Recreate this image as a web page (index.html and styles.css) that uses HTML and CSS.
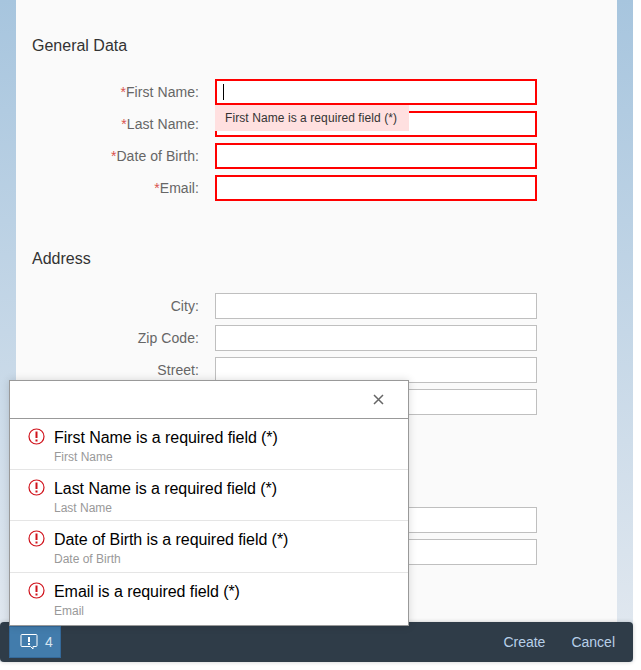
FILE: index.html
```html
<!DOCTYPE html>
<html lang="en">
<head>
  <meta charset="UTF-8" />
  <title>Create Form</title>
  <link rel="stylesheet" href="styles.css">
</head>
<body>
  <div class="shell">
    <div class="panel">
      <h2 class="section-title">General Data</h2>
      <div class="form-row"><label><span class="req">*</span>First Name:</label>
        <div class="field error"><span class="caret"></span></div></div>
      <div class="form-row"><label><span class="req">*</span>Last Name:</label>
        <div class="field error"></div></div>
      <div class="form-row"><label><span class="req">*</span>Date of Birth:</label>
        <div class="field error"></div></div>
      <div class="form-row"><label><span class="req">*</span>Email:</label>
        <div class="field error"></div></div>

      <h2 class="section-title address">Address</h2>
      <div class="form-row"><label>City:</label><div class="field"></div></div>
      <div class="form-row"><label>Zip Code:</label><div class="field"></div></div>
      <div class="form-row"><label>Street:</label><div class="field"></div></div>
      <div class="form-row"><label></label><div class="field"></div></div>

      <div class="form-group">
        <div class="form-row"><label></label><div class="field"></div></div>
        <div class="form-row"><label></label><div class="field"></div></div>
      </div>
    </div>

    <div class="footer">
      <button class="msg-btn">
        <svg width="18" height="18" viewBox="0 0 18 18" fill="none">
          <path d="M2 1.500h14a1 1 0 0 1 1 1v10a1 1 0 0 1-1 1h-3v2.500l-2.500-2.500h-8.500a1 1 0 0 1-1-1v-10a1 1 0 0 1 1-1z" stroke="#fff" stroke-width="1"/>
          <rect x="8" y="4" width="2" height="5" fill="#fff"/>
          <rect x="8" y="10" width="2" height="2" fill="#fff"/>
        </svg>
        <span>4</span>
      </button>
      <div class="actions">
        <a class="action">Create</a>
        <a class="action">Cancel</a>
      </div>
    </div>

    <div class="tooltip">First Name is a required field (*)</div>

    <div class="popover">
      <div class="popover-head">
        <svg class="close" width="11" height="11" viewBox="0 0 11 11"><path d="M1 1l9 9M10 1l-9 9" stroke="#666" stroke-width="1.500" fill="none"/></svg>
      </div>
      <div class="msg">
        <svg class="msg-icon" width="17" height="17" viewBox="0 0 17 17"><circle cx="8.500" cy="8.500" r="7.500" stroke="#d0121b" stroke-width="1.200" fill="none"/><rect x="7.500" y="3.500" width="2" height="6.500" fill="#d0121b"/><rect x="7.500" y="11.500" width="2" height="2" fill="#d0121b"/></svg>
        <div><div class="msg-title">First Name is a required field (*)</div><div class="msg-sub">First Name</div></div>
      </div>
      <div class="msg">
        <svg class="msg-icon" width="17" height="17" viewBox="0 0 17 17"><circle cx="8.500" cy="8.500" r="7.500" stroke="#d0121b" stroke-width="1.200" fill="none"/><rect x="7.500" y="3.500" width="2" height="6.500" fill="#d0121b"/><rect x="7.500" y="11.500" width="2" height="2" fill="#d0121b"/></svg>
        <div><div class="msg-title">Last Name is a required field (*)</div><div class="msg-sub">Last Name</div></div>
      </div>
      <div class="msg tall">
        <svg class="msg-icon" width="17" height="17" viewBox="0 0 17 17"><circle cx="8.500" cy="8.500" r="7.500" stroke="#d0121b" stroke-width="1.200" fill="none"/><rect x="7.500" y="3.500" width="2" height="6.500" fill="#d0121b"/><rect x="7.500" y="11.500" width="2" height="2" fill="#d0121b"/></svg>
        <div><div class="msg-title">Date of Birth is a required field (*)</div><div class="msg-sub">Date of Birth</div></div>
      </div>
      <div class="msg">
        <svg class="msg-icon" width="17" height="17" viewBox="0 0 17 17"><circle cx="8.500" cy="8.500" r="7.500" stroke="#d0121b" stroke-width="1.200" fill="none"/><rect x="7.500" y="3.500" width="2" height="6.500" fill="#d0121b"/><rect x="7.500" y="11.500" width="2" height="2" fill="#d0121b"/></svg>
        <div><div class="msg-title">Email is a required field (*)</div><div class="msg-sub">Email</div></div>
      </div>
    </div>
  </div>
</body>
</html>
```

FILE: styles.css
```css
html, body {
  margin: 0;
  padding: 0;
  background: #fff;
}
body {
  font-family: 'Liberation Sans', Arial, sans-serif;
  width: 641px;
  height: 670px;
  overflow: hidden;
}
.shell {
  position: relative;
  width: 633px;
  height: 662px;
  display: flex;
  flex-direction: column;
  background: linear-gradient(#a7c5de, #e3e9f0);
}
.panel {
  flex: 1;
  margin: 0 16px;
  padding: 0 16px;
  background: #fafafa;
  overflow: hidden;
}
.section-title {
  font-size: 16px;
  font-weight: normal;
  line-height: 20px;
  color: #333;
  margin: 36px 0 20px;
}
.section-title.address {
  margin: 45px 0 21px;
}
.form-group {
  margin-top: 86px;
}
.form-row {
  display: flex;
  align-items: center;
  gap: 16px;
  height: 32px;
}
.form-row label {
  width: 167px;
  text-align: right;
  font-size: 14px;
  letter-spacing: 0.06px;
  color: #666;
}
.req {
  color: #d9534f;
}
.field {
  width: 320px;
  height: 24px;
  background: #fff;
  border: 1px solid #bfbfbf;
  display: flex;
  align-items: center;
}
.field.error {
  width: 318px;
  height: 22px;
  border: 2px solid #f00;
}
.caret {
  width: 1px;
  height: 16px;
  margin-left: 6px;
  background: #000;
}
.footer {
  height: 40px;
  flex-shrink: 0;
  display: flex;
  align-items: center;
  justify-content: space-between;
  background: #2f3c48;
  border-radius: 4px;
  padding-left: 9px;
  padding-right: 8px;
  box-shadow: 0 0 4px rgba(0,0,0,0.2);
  position: relative;
}
.msg-btn {
  display: flex;
  align-items: center;
  gap: 7px;
  height: 32px;
  width: 52px;
  padding: 0 0 0 10px;
  border: 1px solid #34699a;
  background: #427cac;
  font: 14px 'Liberation Sans', Arial, sans-serif;
  color: #d6e4f0;
  box-sizing: border-box;
}
.actions {
  display: flex;
  gap: 26px;
  padding-right: 10px;
}
.action {
  font-size: 14px;
  color: #b8d0e8;
}
.tooltip {
  position: absolute;
  left: 215px;
  top: 105px;
  width: 194px;
  height: 26px;
  padding-left: 10px;
  box-sizing: border-box;
  background: #ffe0e0;
  color: #333;
  font-size: 12px;
  letter-spacing: 0.08px;
  line-height: 26px;
}
.popover {
  position: absolute;
  left: 9px;
  top: 380px;
  width: 400px;
  height: 246px;
  box-sizing: border-box;
  background: #fff;
  border: 1px solid #999;
  box-shadow: 0 0 8px rgba(0,0,0,0.15);
}
.popover-head {
  height: 37px;
  display: flex;
  align-items: center;
  justify-content: flex-end;
  padding-right: 24px;
  border-bottom: 1px solid #999;
}
.msg {
  display: flex;
  gap: 9px;
  height: 51px;
  padding: 9px 0 0 18px;
  box-sizing: border-box;
  border-bottom: 1px solid #e5e5e5;
}
.msg.tall {
  height: 52px;
}
.msg:last-child {
  border-bottom: none;
}
.msg-title {
  font-size: 16px;
  letter-spacing: -0.06px;
  line-height: 20px;
  color: #000;
}
.msg-sub {
  font-size: 12px;
  line-height: 18px;
  color: #999;
}
```
